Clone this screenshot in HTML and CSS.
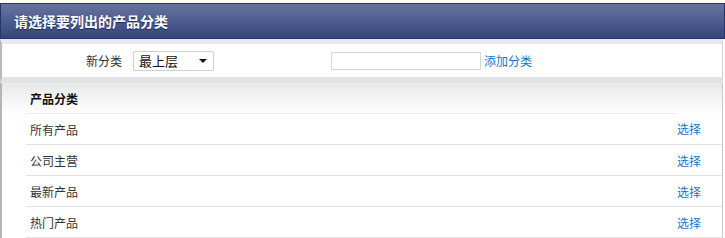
FILE: index.html
```html
<!DOCTYPE html>
<html lang="zh-CN">
<head>
    <meta charset="UTF-8">
    <title>选择产品分类</title>
    <link rel="stylesheet" href="styles.css">
</head>
<body>
    <div class="page">
        <div class="title-bar">请选择要列出的产品分类</div>

        <div class="toolbar">
            <span class="label">新分类</span>
            <div class="select">
                <span>最上层</span>
                <svg width="8" height="4" viewBox="0 0 8 4"><path d="M0 0h8L4 4z" fill="#111"/></svg>
            </div>
            <input type="text" class="name-input">
            <a href="#" class="link">添加分类</a>
        </div>

        <div class="panel">
            <table class="cat-table">
                <tr class="head">
                    <th>产品分类</th>
                    <th></th>
                </tr>
                <tr>
                    <td>所有产品</td>
                    <td class="op"><a href="#" class="link">选择</a></td>
                </tr>
                <tr>
                    <td>公司主营</td>
                    <td class="op"><a href="#" class="link">选择</a></td>
                </tr>
                <tr>
                    <td>最新产品</td>
                    <td class="op"><a href="#" class="link">选择</a></td>
                </tr>
                <tr>
                    <td>热门产品</td>
                    <td class="op"><a href="#" class="link">选择</a></td>
                </tr>
            </table>
        </div>
    </div>
</body>
</html>
```

FILE: styles.css
```css
body {
    margin: 0;
    background: #fff;
    font-family: "Noto Sans CJK SC", "Liberation Sans", sans-serif;
    font-size: 12px;
    color: #333;
}

.page {
    width: 725px;
    padding-top: 3px;
}

.title-bar {
    height: 34px;
    line-height: 34px;
    padding-left: 13px;
    background: linear-gradient(#66749f, #34457b);
    border: 1px solid #24346b;
    color: #fff;
    font-size: 14px;
    font-weight: bold;
    text-shadow: 0 1px 1px #1c2a55;
}

.toolbar {
    display: flex;
    align-items: center;
    height: 33px;
    margin: 0 2px 0 0;
    border-top: 5px solid #e7e8ea;
    border-bottom: 6px solid #e2e3e5;
    border-left: 2px solid #b9b9b9;
    border-right: 1px solid #d0d0d0;
    background: #fff;
}

.label {
    width: 120px;
    text-align: right;
}

.select {
    display: flex;
    align-items: center;
    justify-content: space-between;
    box-sizing: border-box;
    width: 81px;
    height: 20px;
    margin-left: 11px;
    padding: 0 6px 0 5px;
    border: 1px solid #cfcfcf;
    border-radius: 2px;
    color: #111;
    font-size: 13px;
}

.name-input {
    box-sizing: border-box;
    width: 150px;
    height: 18px;
    margin: 0 0 0 117px;
    border: 1px solid #d6d6d6;
    padding: 0;
}

.toolbar .link {
    margin-left: 3px;
}

.link {
    color: #1577c9;
    text-decoration: none;
}

.panel {
    width: 720px;
    height: 156px;
    border-left: 2px solid #b5b5b5;
    border-right: 1px solid #c8c8c8;
    background: linear-gradient(#e8e8e8, #fff 31px);
}

.cat-table {
    width: 696px;
    margin-left: 24px;
    border-collapse: collapse;
}

.cat-table th,
.cat-table td {
    height: 30px;
    padding: 0 0 0 4px;
    text-align: left;
    border-bottom: 1px solid #e2e2e2;
}

.cat-table th {
    font-weight: bold;
    color: #111;
    border-bottom-color: #ececec;
}

.cat-table .head th:last-child {
    border-bottom: none;
}

.cat-table .op {
    width: 45px;
    padding: 0;
}
```
